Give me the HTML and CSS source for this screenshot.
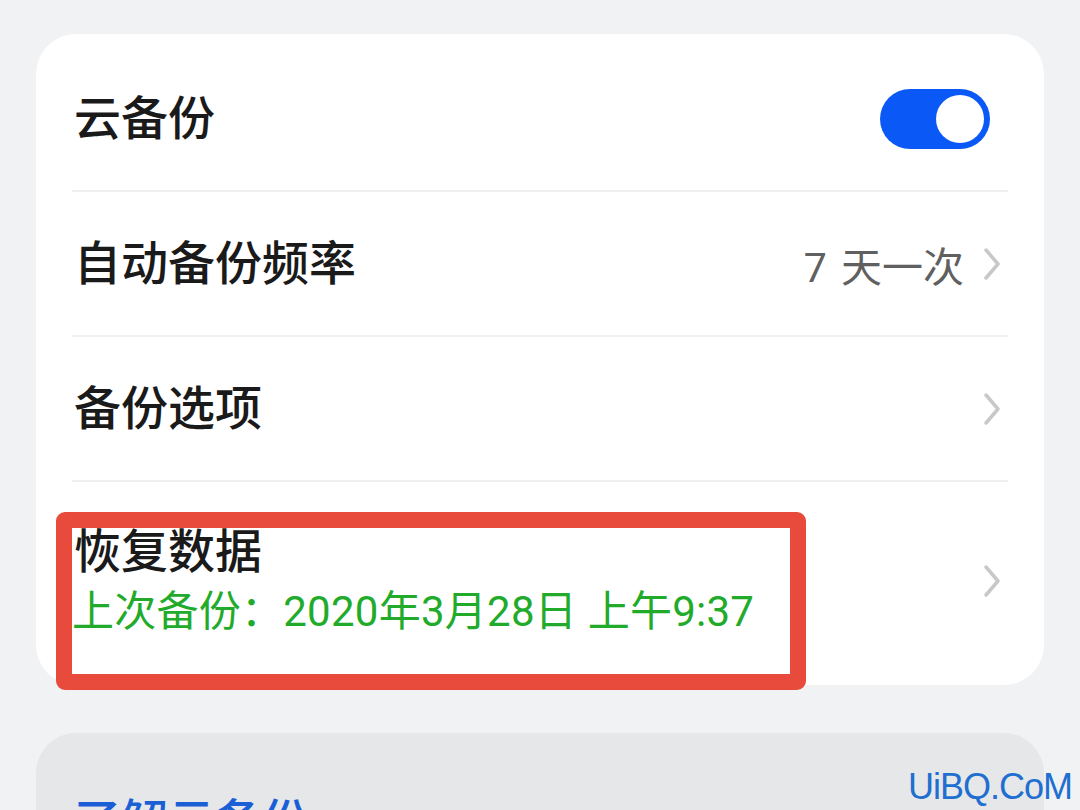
FILE: index.html
```html
<!DOCTYPE html>
<html lang="zh-CN">
<head>
    <meta charset="UTF-8">
    <meta name="viewport" content="width=device-width, initial-scale=1.0">
    <title>云备份</title>
    <link rel="stylesheet" href="styles.css">
</head>
<body>
    <div class="page">
        <!-- Tarjeta principal de ajustes -->
        <div class="card">
            <div class="row row-first">
                <span class="title">云备份</span>
                <span class="switch"><span class="knob"></span></span>
            </div>
            <div class="row">
                <span class="title">自动备份频率</span>
                <span class="right">
                    <span class="value">7 天一次</span>
                    <svg class="chevron" viewBox="0 0 20 36"><path d="M4 4 L16 18 L4 32"/></svg>
                </span>
            </div>
            <div class="row">
                <span class="title">备份选项</span>
                <span class="right">
                    <svg class="chevron" viewBox="0 0 20 36"><path d="M4 4 L16 18 L4 32"/></svg>
                </span>
            </div>
            <div class="row row-last">
                <div class="text-block">
                    <div class="title">恢复数据</div>
                    <div class="subtitle">上次备份：2020年3月28日 上午9:37</div>
                </div>
                <span class="right">
                    <svg class="chevron" viewBox="0 0 20 36"><path d="M4 4 L16 18 L4 32"/></svg>
                </span>
            </div>
        </div>

        <!-- Marca roja encima de la fila -->
        <div class="highlight"></div>

        <div class="card card-grey">
            <div class="link">了解云备份</div>
        </div>

        <div class="watermark">UiBQ.CoM</div>
    </div>
</body>
</html>
```

FILE: styles.css
```css
/* Estilos generales */
html, body {
    margin: 0;
    padding: 0;
    height: 810px;
    overflow: hidden;
}
body {
    background-color: #f1f2f4;
    font-family: Roboto, "Noto Sans CJK SC", sans-serif;
    color: #1a1a1a;
}
.page {
    position: relative;
    padding: 34px 36px 0;
}
.card {
    background-color: #ffffff;
    border-radius: 40px;
    padding: 13px 36px 0;
}
.row {
    display: flex;
    align-items: center;
    justify-content: space-between;
    height: 145px;
    border-bottom: 2px solid #efefef;
    box-sizing: border-box;
    padding-left: 2px;
}
.row-last {
    height: 203px;
    border-bottom: none;
    padding-bottom: 6px;
}
.title {
    font-size: 47px;
    line-height: 56px;
    font-weight: 500;
}
.subtitle {
    font-size: 42px;
    line-height: 52px;
    margin-top: 6px;
    color: #22ab2b;
    margin-left: -2px;
    letter-spacing: 0.25px;
}
.right {
    display: flex;
    align-items: center;
    gap: 18px;
}
.value {
    font-size: 41px;
    color: #606060;
    word-spacing: 4px;
}
.chevron {
    width: 20px;
    height: 36px;
    margin-right: 6px;
}
.chevron path {
    fill: none;
    stroke: #c8c8c8;
    stroke-width: 3.5;
    stroke-linecap: round;
    stroke-linejoin: round;
}
/* Interruptor azul */
.switch {
    position: relative;
    width: 110px;
    height: 60px;
    border-radius: 30px;
    background-color: #0a59f7;
    margin-right: 18px;
}
.knob {
    position: absolute;
    top: 6px;
    right: 6px;
    width: 48px;
    height: 48px;
    border-radius: 50%;
    background-color: #ffffff;
}
/* Recuadro rojo */
.highlight {
    position: absolute;
    left: 56px;
    top: 512px;
    width: 750px;
    height: 178px;
    box-sizing: border-box;
    border: 16px solid #e84a3c;
    border-radius: 9px;
}
.card-grey {
    background-color: #e6e7e9;
    margin-top: 48px;
    height: 200px;
    padding-top: 50px;
}
.link {
    font-size: 47px;
    font-weight: 500;
    color: #1a5fd6;
    padding-left: 2px;
}
.watermark {
    position: absolute;
    right: 8px;
    top: 766px;
    font-family: "Liberation Sans", sans-serif;
    font-size: 36px;
    letter-spacing: -1px;
    color: #1e6fd0;
}
```
